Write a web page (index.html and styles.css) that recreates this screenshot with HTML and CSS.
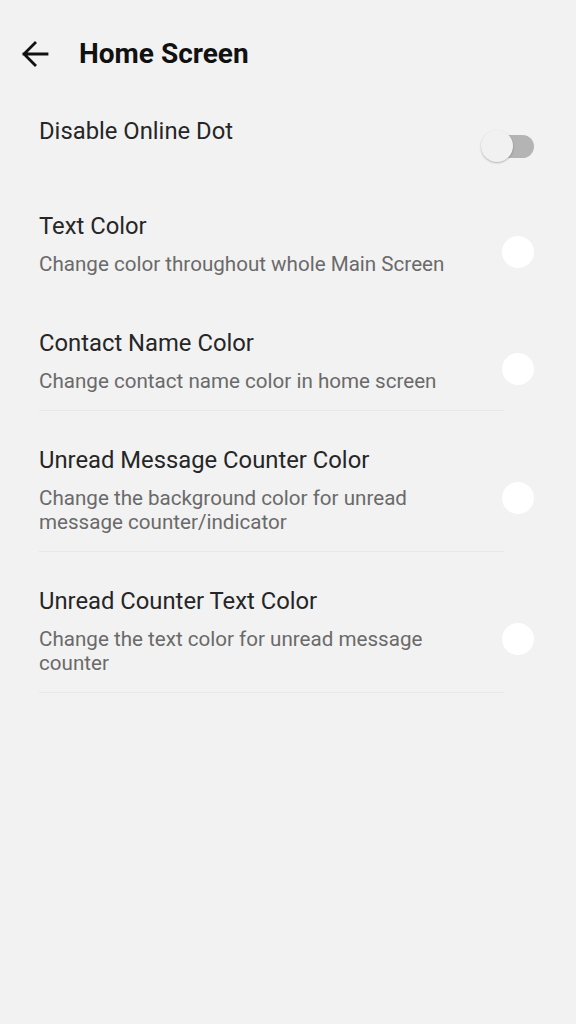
FILE: index.html
```html
<!DOCTYPE html>
<html>
<head>
<meta charset="utf-8">
<link rel="stylesheet" href="styles.css">
</head>
<body>
<header class="appbar">
  <svg class="back" width="28" height="26" viewBox="0 0 28 26">
    <path d="M26 13 H3 M14 2 L3 13 L14 24" fill="none" stroke="#111" stroke-width="2.8" stroke-linecap="square"/>
  </svg>
  <h1 class="title">Home Screen</h1>
</header>
<main class="list">
  <div class="row row-switch">
    <div class="text"><div class="label">Disable Online Dot</div></div>
    <div class="switch"><span class="track"></span><span class="knob"></span></div>
  </div>
  <div class="divider divider-clear"></div>
  <div class="row">
    <div class="text">
      <div class="label">Text Color</div>
      <div class="sub">Change color throughout whole Main Screen</div>
    </div>
    <span class="swatch"></span>
  </div>
  <div class="divider divider-clear"></div>
  <div class="row">
    <div class="text">
      <div class="label">Contact Name Color</div>
      <div class="sub">Change contact name color in home screen</div>
    </div>
    <span class="swatch"></span>
  </div>
  <div class="divider"></div>
  <div class="row">
    <div class="text">
      <div class="label">Unread Message Counter Color</div>
      <div class="sub">Change the background color for unread message counter/indicator</div>
    </div>
    <span class="swatch"></span>
  </div>
  <div class="divider"></div>
  <div class="row">
    <div class="text">
      <div class="label">Unread Counter Text Color</div>
      <div class="sub">Change the text color for unread message counter</div>
    </div>
    <span class="swatch"></span>
  </div>
  <div class="divider"></div>
</main>
</body>
</html>
```
FILE: styles.css
```css
html, body {
  margin: 0;
  padding: 0;
  background: #f2f2f2;
  font-family: Roboto, "Noto Sans", sans-serif;
  height: 100%;
}
.appbar {
  display: flex;
  align-items: center;
  padding-left: 21px;
  padding-top: 26px;
  box-sizing: border-box;
  height: 82px;
}
.back {
  display: block;
  flex: none;
}
.title {
  margin: 0 0 0 30px;
  font-size: 28px;
  font-weight: 700;
  color: #111;
  line-height: 30px;
}
.list {
  display: flex;
  flex-direction: column;
}
.row {
  display: flex;
  align-items: center;
  padding: 34px 42px 17px 39px;
}
.row-switch {
  align-items: flex-start;
  padding-bottom: 14px;
}
.text {
  flex: 1;
  min-width: 0;
  padding-right: 50px;
}
.label {
  font-size: 23.8px;
  line-height: 30px;
  color: #262626;
}
.sub {
  margin-top: 11px;
  font-size: 20.6px;
  line-height: 24px;
  color: #6a6a6a;
}
.switch {
  position: relative;
  width: 53px;
  height: 32px;
  margin-top: 14px;
  flex: none;
}
.track {
  position: absolute;
  right: 0;
  top: 5px;
  width: 44px;
  height: 23px;
  border-radius: 12px;
  background: #b4b4b4;
}
.knob {
  position: absolute;
  left: 0;
  top: 0;
  width: 32px;
  height: 32px;
  border-radius: 50%;
  background: #f1f1f1;
  box-shadow: 0 1px 2px rgba(0,0,0,0.25);
}
.swatch {
  flex: none;
  width: 32px;
  height: 32px;
  border-radius: 50%;
  background: #fff;
  margin-top: 16px;
}
.divider {
  height: 1px;
  background: #e8e8e8;
  margin: 0 72px 0 39px;
}
.divider-clear {
  background: transparent;
}
```
